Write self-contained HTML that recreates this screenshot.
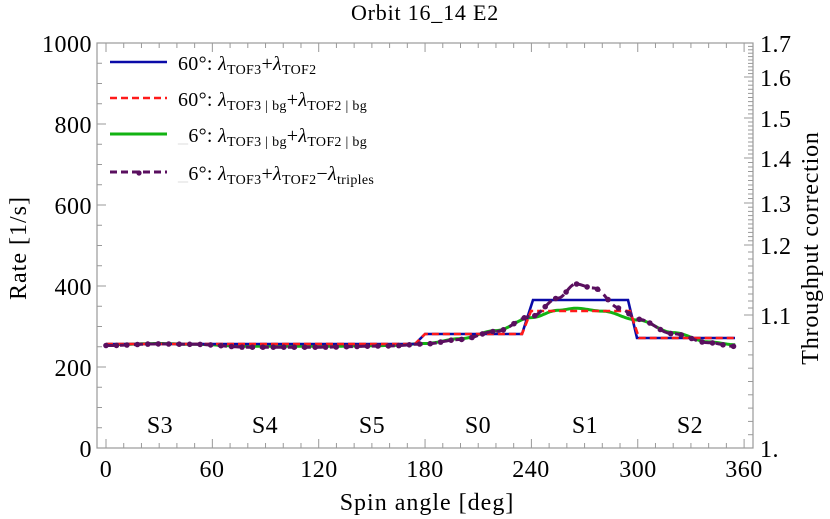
<!DOCTYPE html>
<html><head><meta charset="utf-8"><style>
html,body{margin:0;padding:0;background:#fff;}
svg{display:block;font-family:"Liberation Serif","DejaVu Serif",serif;}
</style></head><body>
<svg id="s" width="830" height="519" viewBox="0 0 830 519" xmlns="http://www.w3.org/2000/svg">
<rect width="830" height="519" fill="#fff"/>
<text x="425" y="20" font-size="22" letter-spacing="0.8" text-anchor="middle">Orbit 16_14 E2</text>
<rect x="97" y="43" width="656" height="405" fill="none" stroke="#999" stroke-width="1.2"/>
<g id="ticks" stroke="#999" stroke-width="1"></g>
<g font-size="24" text-anchor="end" letter-spacing="0.5">
<text x="92" y="52">1000</text><text x="92" y="133">800</text><text x="92" y="214">600</text>
<text x="92" y="295">400</text><text x="92" y="376">200</text><text x="92" y="457">0</text>
</g>
<g font-size="24" text-anchor="middle" letter-spacing="0.5">
<text x="106" y="477">0</text><text x="212" y="477">60</text><text x="319" y="477">120</text>
<text x="425" y="477">180</text><text x="531" y="477">240</text><text x="638" y="477">300</text><text x="744" y="477">360</text>
</g>
<g font-size="24" letter-spacing="0.5">
<text x="760" y="52">1.7</text><text x="760" y="86">1.6</text><text x="760" y="127">1.5</text>
<text x="760" y="167">1.4</text><text x="760" y="212">1.3</text><text x="760" y="254">1.2</text>
<text x="760" y="324">1.1</text><text x="760" y="457">1.</text>
</g>
<g font-size="24" text-anchor="middle" letter-spacing="0.5">
<text x="160" y="433">S3</text><text x="265" y="433">S4</text><text x="372" y="433">S5</text>
<text x="478" y="433">S0</text><text x="585" y="433">S1</text><text x="690" y="433">S2</text>
</g>
<text x="427" y="510" font-size="24" letter-spacing="1" text-anchor="middle">Spin angle [deg]</text>
<text transform="translate(26,248) rotate(-90)" font-size="24" letter-spacing="1" text-anchor="middle">Rate [1/s]</text>
<text transform="translate(818,248) rotate(-90)" font-size="24" letter-spacing="0.8" text-anchor="middle">Throughput correction</text>

<path id="green" fill="none" stroke="#12b312" stroke-width="3"/>
<path d="M106,344 L415,344 L425,334 L522,334 L533,300 L628,300 L637,338 L735,338" fill="none" stroke="#0a0aa8" stroke-width="2.6"/>
<path d="M106,344 L415,344 L425,334 L522,334 L531,311 L630,311 L639,338 L735,338" fill="none" stroke="#ff1a1a" stroke-width="2.6" stroke-dasharray="7,4"/>
<path id="purple" fill="none" stroke="#5a0f5f" stroke-width="3" stroke-dasharray="9,5"/>
<g id="dots" fill="#5a0f5f"></g>

<g font-size="20" letter-spacing="0.3">
<line x1="110" y1="62" x2="167" y2="62" stroke="#0a0aa8" stroke-width="2.6"/>
<text x="178" y="70">60°: <tspan font-style="italic">λ</tspan><tspan font-size="14" dy="4">TOF3</tspan><tspan dy="-4">+</tspan><tspan font-style="italic">λ</tspan><tspan font-size="14" dy="4">TOF2</tspan></text>
<line x1="110" y1="98" x2="167" y2="98" stroke="#ff1a1a" stroke-width="2.6" stroke-dasharray="7,4"/>
<text x="178" y="106">60°: <tspan font-style="italic">λ</tspan><tspan font-size="14" dy="4">TOF3 | bg</tspan><tspan dy="-4">+</tspan><tspan font-style="italic">λ</tspan><tspan font-size="14" dy="4">TOF2 | bg</tspan></text>
<line x1="110" y1="134" x2="167" y2="134" stroke="#12b312" stroke-width="3"/>
<text x="178" y="142"><tspan fill="#ddd">_</tspan>6°: <tspan font-style="italic">λ</tspan><tspan font-size="14" dy="4">TOF3 | bg</tspan><tspan dy="-4">+</tspan><tspan font-style="italic">λ</tspan><tspan font-size="14" dy="4">TOF2 | bg</tspan></text>
<line x1="110" y1="172" x2="167" y2="172" stroke="#5a0f5f" stroke-width="3" stroke-dasharray="7,4"/>
<circle cx="139" cy="173" r="2.6" fill="#5a0f5f"/>
<text x="178" y="180"><tspan fill="#ddd">_</tspan>6°: <tspan font-style="italic">λ</tspan><tspan font-size="14" dy="4">TOF3</tspan><tspan dy="-4">+</tspan><tspan font-style="italic">λ</tspan><tspan font-size="14" dy="4">TOF2</tspan><tspan dy="-4">−</tspan><tspan font-style="italic">λ</tspan><tspan font-size="14" dy="4">triples</tspan></text>
</g>
</svg>
<script>
(function(){
function X(d){return 106+1.7725*d;}
function Y(v){return 448-0.405*v;}
var t=document.getElementById("ticks"),h="";
for(var d=0;d<=360;d+=10){var x=X(d),L=(d%60==0)?9:5;
h+='<line x1="'+x+'" y1="448" x2="'+x+'" y2="'+(448-L)+'"/><line x1="'+x+'" y1="43" x2="'+x+'" y2="'+(43+L)+'"/>';}
for(var v=0;v<=1000;v+=50){var y=Y(v),L=(v%200==0)?9:5;h+='<line x1="97" y1="'+y+'" x2="'+(97+L)+'" y2="'+y+'"/>';}
var mv=[1.0,1.1,1.2,1.3,1.4,1.5,1.6,1.7],my=[448,315,245,203,158,118,77,43];
function RY(v){for(var i=0;i<7;i++){if(v<=mv[i+1]+1e-9){return my[i]+(my[i+1]-my[i])*(v-mv[i])/0.1;}}return 43;}
for(var k=100;k<=170;k++){var v=k/100,y=RY(v),L=(k%10==0)?9:5;h+='<line x1="'+(753-L)+'" y1="'+y+'" x2="753" y2="'+y+'"/>';}
t.innerHTML=h;
var gp=[[0,255],[30,258],[50,256],[80,251],[120,251],[160,253],[180,258],[200,270],[220,290],[240,322],[255,340],[265,345],[280,338],[300,316],[320,285],[340,262],[355,255]];
var pp=[[0,253],[30,257],[50,256],[80,249],[120,249],[160,252],[180,257],[200,268],[220,288],[240,325],[255,370],[265,405],[275,395],[290,345],[300,318],[320,282],[340,260],[355,251]];
function interp(p,d){for(var i=0;i<p.length-1;i++){if(d<=p[i+1][0]){var a=p[i],b=p[i+1];var f=(d-a[0])/(b[0]-a[0]);f=(1-Math.cos(Math.PI*f))/2;return a[1]+(b[1]-a[1])*f;}}return p[p.length-1][1];}
function path(p){var s="";for(var d=0;d<=355;d+=1){s+=(d?"L":"M")+X(d).toFixed(1)+","+Y(interp(p,d)).toFixed(1);}return s;}
document.getElementById("green").setAttribute("d",path(gp));
document.getElementById("purple").setAttribute("d",path(pp));
var dh="";for(var d=0;d<=355;d+=5.9){dh+='<circle cx="'+X(d).toFixed(1)+'" cy="'+Y(interp(pp,d)).toFixed(1)+'" r="2.8"/>';}
document.getElementById("dots").innerHTML=dh;
})();
</script>
</body></html>
